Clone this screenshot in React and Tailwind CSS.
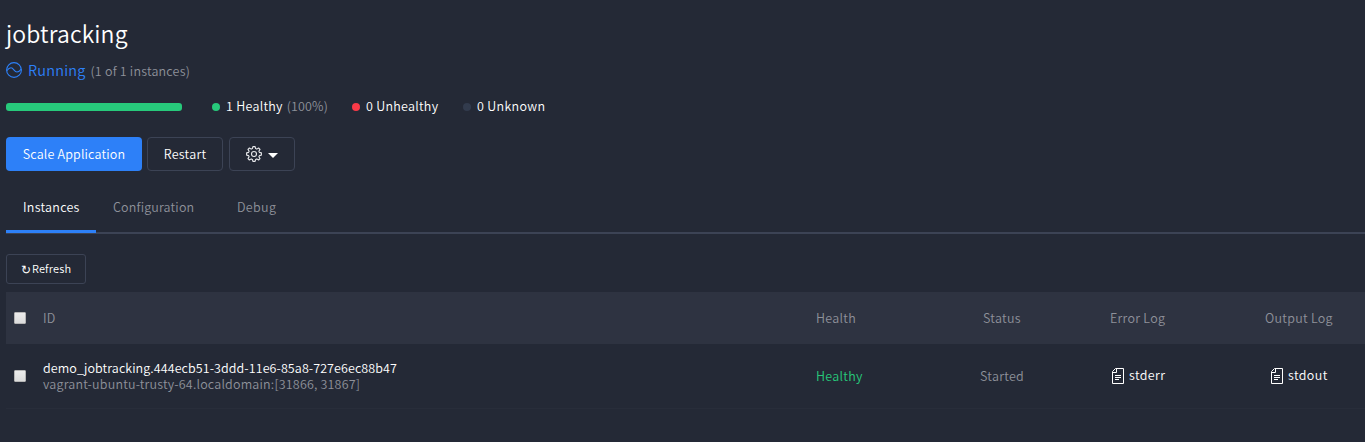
const Caret = () => (
  <svg width="10" height="5" viewBox="0 0 10 5" fill="#fff">
    <path d="M0 0h10L5 5z" />
  </svg>
);

const Gear = () => (
  <svg width="16" height="16" viewBox="0 0 16 16" fill="none" stroke="#e6e7ea" strokeWidth="1.1" strokeLinejoin="round">
    <path d="M6.900 .6h2.200l.5 2 1.200.5 1.800-1.100 1.400 1.400-1.100 1.800.5 1.200 2 .5v2.200l-2 .5-.5 1.200 1.100 1.800-1.400 1.400-1.800-1.100-1.200.5-.5 2H6.900l-.5-2-1.200-.5L3.400 14 2 12.600l1.100-1.800-.5-1.200-2-.5V6.900l2-.5.5-1.200L2 3.400 3.400 2l1.800 1.100 1.200-.5z" />
    <circle cx="8" cy="8" r="2.5" />
  </svg>
);

const RunningIcon = () => (
  <svg width="16" height="16" viewBox="0 0 16 16" fill="none" stroke="#2d80f8" strokeWidth="1.1">
    <circle cx="8" cy="8" r="7.4" />
    <path d="M.8 8.800C2.200 6.800 3.500 5.700 5 5.700C7.600 5.700 8.200 10 11 10C12.700 10 14 8.800 15.200 7.200" />
  </svg>
);

const FileIcon = () => (
  <svg className="shrink-0" width="12" height="16" viewBox="0 0 12 16" fill="none" stroke="#fff">
    <path d="M3.500 .5h8v15H.5v-12zM4.500 .5v4h-4M3 7.500h6M3 9.500h6M3 11.500h4" />
  </svg>
);

const Check = () => (
  <span className="block size-3 rounded-[1px] border border-[#b5b5b5] bg-linear-to-b from-[#ececec] to-[#dcdcdc]" />
);

const Dot = ({ color }) => <span className={`mr-[6px] size-2 rounded-full ${color}`} />;

export default function App() {
  return (
    <div className="h-[442px] w-[1365px] overflow-hidden bg-[#242936] pl-[6px] font-['Noto_Sans_CJK_SC','Noto_Sans',sans-serif] text-[12.5px] leading-4 font-[350] tracking-[0.27px] whitespace-nowrap text-white">
      <h1 className="h-[61px] pt-[13px] text-[23px] leading-10 tracking-[0.12px]">jobtracking</h1>
      <div className="-mt-px flex h-5 items-center">
        <RunningIcon />
        <span className="ml-[6px] pb-px text-[14.5px] tracking-[0.2px] text-[#2d80f8]">Running</span>
        <span className="ml-[5px] pt-px tracking-[0.2px] text-[#8e919a]">(1 of 1 instances)</span>
      </div>
      <div className="mt-[17px] flex h-5 items-center">
        <div className="h-2 w-44 rounded-[3px] bg-[#27c97b]" />
        <div className="ml-[30px] flex w-[140px] items-center">
          <Dot color="bg-[#27c97b]" />
          <span className="pb-[2px]">1 Healthy</span>
          <span className="ml-1 pb-[2px] tracking-[0.15px] text-[#8e919a]">(100%)</span>
        </div>
        <div className="flex w-[111px] items-center">
          <Dot color="bg-[#f93a48]" />
          <span className="pb-[2px]">0 Unhealthy</span>
        </div>
        <div className="flex items-center">
          <Dot color="bg-[#323b4d]" />
          <span className="pb-[2px] tracking-[0.33px]">0 Unknown</span>
        </div>
      </div>
      <div className="mt-5 flex h-[34px]">
        <button className="w-[136px] rounded bg-[#2d80f8] tracking-[0.17px]">Scale Application</button>
        <button className="ml-[5px] w-[76px] rounded border border-[#3c4355]">Restart</button>
        <button className="ml-[6px] flex w-[66px] items-center gap-[6px] rounded border border-[#3c4355] pl-4">
          <Gear />
          <span className="pt-[2px]"><Caret /></span>
        </button>
      </div>
      <nav className="mt-[14px] flex h-[49px] border-b-2 border-[#3c4355] text-[#8e919a]">
        <div className="h-12 w-[90px] border-b-3 border-[#2d80f8] pt-[14px] pl-[17px] text-white">Instances</div>
        <div className="w-[123px] pt-[14px] pl-[17px] tracking-[0.17px]">Configuration</div>
        <div className="pt-[14px] pl-[18px] tracking-[0.33px]">Debug</div>
      </nav>
      <button className="mt-5 flex h-[30px] w-20 items-center rounded-[3px] border border-[#3c4355] pb-[2px] pl-[14px] text-[11px] tracking-[0.15px]">
        <span className="w-[11px] pt-[3px] font-['DejaVu_Sans'] text-[12px]">↻</span>
        <span>Refresh</span>
      </button>
      <div className="mt-2 grid h-[52px] grid-cols-[37px_773px_167px_127px_155px_100px] items-center bg-[#2e3341] text-[#8e919a]">
        <div className="pl-2"><Check /></div>
        <div>ID</div>
        <div>Health</div>
        <div>Status</div>
        <div>Error Log</div>
        <div>Output Log</div>
      </div>
      <div className="grid h-[65px] grid-cols-[37px_773px_164px_132px_159px_94px] items-center border-b border-[#282d3a] text-[#8e919a]">
        <div className="pl-2"><Check /></div>
        <div>
          <div className="tracking-[0.09px] text-white">demo_jobtracking.444ecb51-3ddd-11e6-85a8-727e6ec88b47</div>
          <div className="tracking-[0.19px]">vagrant-ubuntu-trusty-64.localdomain:[31866, 31867]</div>
        </div>
        <div className="text-[#27c97b]">Healthy</div>
        <div>Started</div>
        <div className="flex items-center gap-[5px] tracking-[0.4px] text-white"><FileIcon /><span className="pb-[2px]">stderr</span></div>
        <div className="flex items-center gap-[5px] tracking-[0.4px] text-white"><FileIcon /><span className="pb-[2px]">stdout</span></div>
      </div>
    </div>
  );
}
